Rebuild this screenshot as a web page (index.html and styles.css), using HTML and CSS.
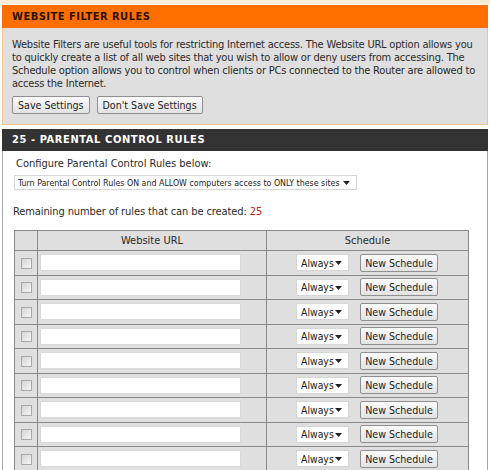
FILE: index.html
```html
<!DOCTYPE html>
<html lang="en">

<head>
    <meta charset="UTF-8">
    <title>Website Filter</title>
    <link rel="stylesheet" href="styles.css">
</head>

<body>

    <div class="box box-info">
        <h2 class="box-title">WEBSITE FILTER RULES</h2>
        <div class="box-body">
            <p>Website Filters are useful tools for restricting Internet access. The Website URL option allows you
                to quickly create a list of all web sites that you wish to allow or deny users from accessing. The
                Schedule option allows you to control when clients or PCs connected to the Router are allowed
                to access the Internet.</p>
            <div class="actions">
                <button class="btn">Save Settings</button>
                <button class="btn">Don't Save Settings</button>
            </div>
        </div>
    </div>

    <div class="box box-rules">
        <h2 class="box-title dark">25 - PARENTAL CONTROL RULES</h2>
        <div class="box-body white">
            <div class="configure">
                <div>Configure Parental Control Rules below:</div>
                <span class="drop drop-mode">
                    <select>
                        <option>Turn Parental Control Rules ON and ALLOW computers access to ONLY these sites</option>
                    </select>
                    <svg class="arrow" width="7" height="4" viewBox="0 0 7 4"><path d="M0 0H7L3.5 4Z" fill="#222"/></svg>
                </span>
            </div>
            <div class="remaining">Remaining number of rules that can be created: <span class="count">25</span></div>

            <table class="rules">
                <thead>
                    <tr>
                        <th class="col-check"></th>
                        <th class="col-url">Website URL</th>
                        <th>Schedule</th>
                    </tr>
                </thead>
                <tbody id="rule-rows"></tbody>
            </table>
        </div>
    </div>

    <script>
        // one row per rule slot shown on screen
        var rows = document.getElementById("rule-rows");
        for (var i = 0; i < 9; i++) {
            var tr = document.createElement("tr");
            tr.innerHTML =
                '<td class="col-check"><input type="checkbox"></td>' +
                '<td class="col-url"><input type="text" class="url"></td>' +
                '<td class="col-sched">' +
                '<span class="drop drop-sched"><select><option>Always</option></select>' +
                '<svg class="arrow" width="7" height="4" viewBox="0 0 7 4"><path d="M0 0H7L3.5 4Z" fill="#222"/></svg></span>' +
                '<button class="btn btn-small">New Schedule</button>' +
                '</td>';
            rows.appendChild(tr);
        }
    </script>

</body>

</html>
```

FILE: styles.css
```css
body {
    font-family: "DejaVu Sans Condensed", "DejaVu Sans", sans-serif;
    font-size: 11px;
    color: #2a2a2a;
    margin: 0;
    padding: 1px 2px 0;
    background-color: #fff;
    border-top: 4px solid #fbecd9;
}

.box-title {
    margin: 0;
    height: 23px;
    line-height: 23px;
    padding-left: 10px;
    font-size: 11px;
    font-weight: bold;
    letter-spacing: 0.5px;
    background-color: #ff6f00;
    color: #2a1200;
}

.box-title.dark {
    background-color: #333;
    color: #fff;
    height: 22px;
    line-height: 22px;
    letter-spacing: 0.6px;
}

.box-info .box-body {
    background-color: #dfdfdf;
    border: 1px solid #f2c48a;
    border-top: none;
    padding: 10px 6px 10px 9px;
}

.box-body p {
    margin: 0;
    line-height: 13px;
    letter-spacing: -0.2px;
}

.actions {
    margin-top: 6px;
    display: flex;
    gap: 7px;
}

.btn {
    font-family: inherit;
    font-size: 10.6px;
    color: #222;
    height: 18px;
    padding: 0 5px;
    background: linear-gradient(#fafafa, #e2e2e2);
    border: 1px solid #8f8f8f;
    border-radius: 2px;
}

.box-rules {
    margin-top: 4px;
}

.box-body.white {
    background: #fff;
    border: 1px solid #a8a8a8;
    border-top: none;
    padding: 6px 10px 0;
}

.configure {
    padding-left: 3px;
    line-height: 14px;
}

.configure .drop-mode {
    margin-top: 4px;
    margin-left: -2px;
}

.drop {
    position: relative;
    display: inline-block;
}

.drop select {
    appearance: none;
    font-family: inherit;
    background: #fff;
    color: #222;
    border: 1px solid #d6d6d6;
    border-radius: 0;
    outline: none;
}

.drop .arrow {
    position: absolute;
    right: 7px;
    top: 6px;
}

.drop-mode select {
    font-size: 8.8px;
    height: 15px;
    width: 343px;
    padding: 0 0 0 3px;
}

.remaining {
    margin-top: 15px;
    line-height: 14px;
    letter-spacing: -0.1px;
}

.count {
    color: #d02020;
}

.rules {
    margin-top: 11px;
    margin-left: 1px;
    width: 455px;
    border-collapse: collapse;
    background: #dfdfdf;
    border: 1px solid #8a8a8a;
}

.rules th,
.rules td {
    border: 1px solid #8a8a8a;
    padding: 0;
}

.rules th {
    font-weight: normal;
    height: 19px;
    text-align: center;
}

.rules td {
    height: 23.5px;
}

.col-check {
    width: 22px;
    text-align: center;
}

.col-url {
    width: 228px;
}

.col-check input {
    appearance: none;
    width: 11px;
    height: 11px;
    margin: 0;
    vertical-align: middle;
    border: 1px solid #a9a9a9;
    background: linear-gradient(135deg, #d4d4d4, #f6f6f6);
}

.url {
    width: 201px;
    height: 17px;
    box-sizing: border-box;
    margin-left: 2px;
    vertical-align: middle;
    border: 1px solid #d8d8d8;
    background: #fff;
    outline: none;
}

.col-sched {
    text-align: left;
    padding-left: 29px !important;
}

.drop-sched {
    vertical-align: middle;
}

.drop-sched select {
    font-size: 10.4px;
    height: 17px;
    width: 53px;
    padding: 0 0 0 4px;
}

.drop-sched .arrow {
    top: 7px;
    right: 7px;
}

.btn-small {
    margin-left: 11px;
    vertical-align: middle;
    height: 18px;
    width: 78px;
    padding: 0;
}
```
